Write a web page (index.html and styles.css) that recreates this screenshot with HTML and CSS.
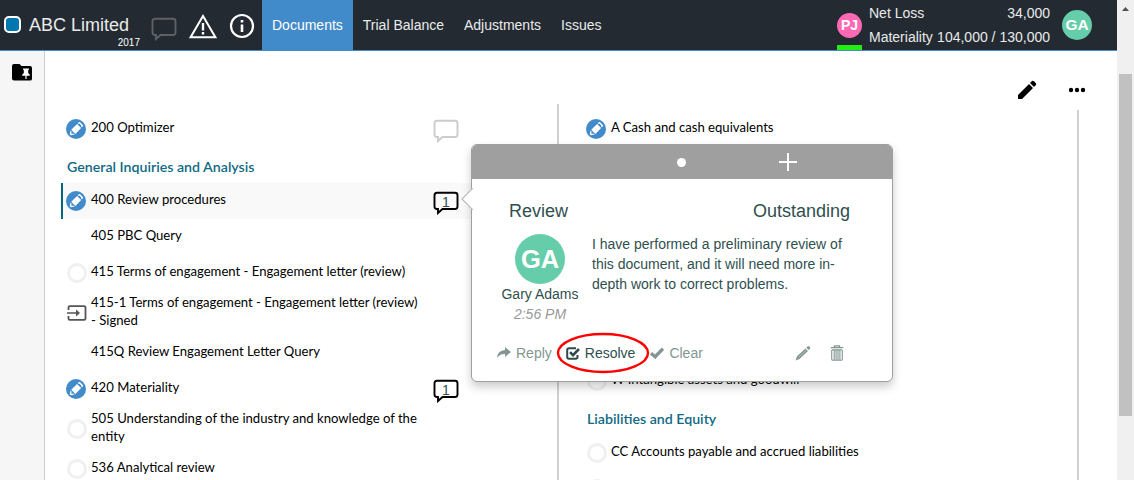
FILE: index.html
```
<!DOCTYPE html>
<html lang="en">
<head>
<meta charset="utf-8">
<title>ABC Limited</title>
<link rel="stylesheet" href="styles.css">
</head>
<body>
<svg class="defs" width="0" height="0">
  <symbol id="edit" viewBox="0 0 20 20">
    <circle cx="10" cy="10" r="10" fill="#428bca"/>
    <g transform="rotate(45 10 10)" fill="#fff">
      <rect x="7.2" y="5.7" width="5.8" height="8.2"/>
      <path d="M7.2 4.7V3.4Q7.2 2.4 8.2 2.4H12Q13 2.4 13 3.4V4.7H11.8V3.8H8.4V4.7ZM7.2 14.9L9.4 18.2H10.8L13 14.9H11.7L10.1 16.7L8.5 14.9Z"/>
    </g>
  </symbol>
  <symbol id="bubble" viewBox="0 0 26 24">
    <path d="M4 1.700H22Q24.500 1.700 24.500 4.200V15.500Q24.500 18 22 18H9.500L5 22V18H4Q1.500 18 1.500 15.500V4.200Q1.500 1.700 4 1.700Z" fill="none" stroke="currentColor" stroke-width="1.900"/>
  </symbol>
</svg>
<div class="app">
  <div class="page">
    <header class="topbar">
      <span class="logo"></span>
      <div class="client"><span class="client-name">ABC Limited</span><span class="year">2017</span></div>
      <svg class="bubble top-bubble"><use href="#bubble"/></svg>
      <svg class="warn" width="30" height="26" viewBox="0 0 30 26"><path d="M15 3L27.400 24.200H2.600Z" fill="none" stroke="#fff" stroke-width="2"/><path d="M15 10V17.500M15 19V21.500" stroke="#fff" stroke-width="2.400"/></svg>
      <svg class="info" width="26" height="26" viewBox="0 0 26 26"><circle cx="13" cy="13" r="11" fill="none" stroke="#fff" stroke-width="2.200"/><path d="M13 7V9.600M13 11.500V19" stroke="#fff" stroke-width="2.600"/></svg>
      <nav class="tabs">
        <a class="tab active">Documents</a><a class="tab">Trial Balance</a><a class="tab">Adjustments</a><a class="tab">Issues</a>
      </nav>
      <div class="peer"><span class="avatar pink">PJ</span><span class="online"></span></div>
      <div class="totals">
        <div class="total"><span>Net Loss</span><span>34,000</span></div>
        <div class="total"><span>Materiality</span><span>104,000 / 130,000</span></div>
      </div>
      <span class="avatar green">GA</span>
    </header>
    <div class="main">
      <aside class="rail">
        <svg width="20" height="17" viewBox="0 0 20 17"><path d="M2 0H7.500L9.500 2H18Q20 2 20 4V15Q20 16.500 18 16.500H2Q0 16.500 0 14.500V2Q0 0 2 0Z"/><path d="M11 4.500H17V5.700H16.200V9L17.800 10.800V11.700H14.600V15H13.400V11.700H10.200V10.800L11.800 9V5.700H11Z" fill="#fff"/></svg>
      </aside>
      <section class="column left">
        <div class="row"><span class="icon"><svg class="mark"><use href="#edit"/></svg></span><span class="label">200 Optimizer</span><span class="note"><svg class="bubble faint"><use href="#bubble"/></svg></span></div>
        <h2 class="heading">General Inquiries and Analysis</h2>
        <div class="row selected"><span class="icon"><svg class="mark"><use href="#edit"/></svg></span><span class="label">400 Review procedures</span><span class="note"><svg class="bubble"><use href="#bubble"/></svg><b class="count">1</b></span></div>
        <div class="row"><span class="icon"></span><span class="label">405 PBC Query</span></div>
        <div class="row"><span class="icon"><i class="ring"></i></span><span class="label">415 Terms of engagement - Engagement letter (review)</span></div>
        <div class="row double"><span class="icon"><svg class="import" width="20" height="16" viewBox="0 0 20 16"><path d="M1.500 5V2.500Q1.500 1.200 2.800 1.200H17.200Q18.500 1.200 18.500 2.500V13.500Q18.500 14.800 17.200 14.800H2.800Q1.500 14.800 1.500 13.500V11" fill="none" stroke="#555" stroke-width="1.800"/><path d="M0 7.200H9V4.500L13 8L9 11.500V8.800H0Z" fill="#555"/></svg></span><span class="label">415-1 Terms of engagement - Engagement letter (review)<br>- Signed</span></div>
        <div class="row"><span class="icon"></span><span class="label">415Q Review Engagement Letter Query</span></div>
        <div class="row"><span class="icon"><svg class="mark"><use href="#edit"/></svg></span><span class="label">420 Materiality</span><span class="note"><svg class="bubble"><use href="#bubble"/></svg><b class="count">1</b></span></div>
        <div class="row double"><span class="icon"><i class="ring"></i></span><span class="label">505 Understanding of the industry and knowledge of the<br>entity</span></div>
        <div class="row"><span class="icon"><i class="ring"></i></span><span class="label">536 Analytical review</span></div>
      </section>
      <section class="column right">
        <div class="tools">
          <svg width="20" height="20" viewBox="0 0 20 20"><path d="M1 19V15L12 4L16 8L5 19ZM13 3L15 1Q16 .5 17 1.300L18.700 3Q19.500 4 19 5L17 7Z"/></svg>
          <svg width="18" height="6" viewBox="0 0 18 6"><circle cx="3" cy="3" r="2.200"/><circle cx="9" cy="3" r="2.200"/><circle cx="15" cy="3" r="2.200"/></svg>
        </div>
        <div class="list">
          <div class="row"><span class="icon"><svg class="mark"><use href="#edit"/></svg></span><span class="label">A Cash and cash equivalents</span></div>
          <div class="row covered"><span class="icon"><i class="ring"></i></span><span class="label">W Intangible assets and goodwill</span></div>
          <h2 class="heading">Liabilities and Equity</h2>
          <div class="row"><span class="icon"><i class="ring"></i></span><span class="label">CC Accounts payable and accrued liabilities</span></div>
          <div class="row"><span class="icon"><i class="ring"></i></span></div>
        </div>
      </section>
    </div>
  </div>
  <div class="scrollbar"><svg width="17" height="17" viewBox="0 0 17 17"><path d="M5 11L8.500 7L12 11Z" fill="#505050"/></svg><span class="thumb"></span></div>

  <div class="popover">
    <svg class="arrow" width="12" height="22" viewBox="0 0 12 22"><path d="M12 0L1 11L12 22" fill="#fff" stroke="#bbb" stroke-width="1.200"/></svg>
    <div class="pop-head">
      <i class="dot"></i>
      <svg class="plus" width="18" height="18" viewBox="0 0 18 18"><path d="M9 0V18M0 9H18" stroke="#fff" stroke-width="2"/></svg>
    </div>
    <div class="pop-title"><span>Review</span><span>Outstanding</span></div>
    <div class="pop-body">
      <div class="author"><span class="avatar big">GA</span><span>Gary Adams</span><em>2:56 PM</em></div>
      <p class="message">I have performed a preliminary review of<br>this document, and it will need more in-<br>depth work to correct problems.</p>
    </div>
    <div class="actions">
      <span class="action reply"><svg width="14" height="12" viewBox="0 0 14 12"><path d="M8 0L14 5L8 10V7Q3 6.700 0 11Q.5 3.500 8 3Z" fill="#839693"/></svg>Reply</span>
      <span class="action resolve"><svg width="14" height="13" viewBox="0 0 14 13"><path d="M10 1.200H3Q1.200 1.200 1.200 3V10Q1.200 11.800 3 11.800H9.500Q11.500 11.800 11.500 10V8" fill="none" stroke="#2f4a4a" stroke-width="2"/><path d="M4 5.200L7 8.200L13 2" fill="none" stroke="#2f4a4a" stroke-width="2.600"/></svg>Resolve<svg class="highlight" width="94" height="42" viewBox="0 0 94 42"><ellipse cx="47" cy="21" rx="45" ry="19" fill="none" stroke="#f00" stroke-width="2.400"/></svg></span>
      <span class="action clear"><svg width="14" height="12" viewBox="0 0 14 12"><path d="M1 6.200L5.200 9.800L13 1.700" fill="none" stroke="#839693" stroke-width="3.400"/></svg>Clear</span>
      <svg class="pen" width="16" height="16" viewBox="0 0 16 16"><path d="M.5 15.500L2 11.300L10.500 3.500L13 6L4.500 14ZM11.300 2.700L12.800 1.300Q13.500 .7 14.300 1.500L15 2.200Q15.500 3 14.900 3.700L13.600 5Z" fill="#839693"/><path d="M3.500 12.500L11.500 5" stroke="#fff" stroke-width=".4"/></svg>
      <svg class="trash" width="14" height="16" viewBox="0 0 14 16"><path d="M4.500 2V.8H9.500V2M.7 2.700H13.300M2 4.800H12" fill="none" stroke="#839693" stroke-width="1.300"/><path d="M1.700 5V14Q1.700 15.300 3 15.300H11Q12.300 15.300 12.300 14V5M4.200 5V15M6.100 5V15M8 5V15M9.900 5V15" fill="none" stroke="#839693" stroke-width="1.100"/></svg>
    </div>
  </div>
</div>
</body>
</html>
```

FILE: styles.css
```
* { box-sizing: border-box; }
body { margin: 0; font: 14px "Liberation Sans", Arial, sans-serif; background: #fff; overflow: hidden; }
svg { display: block; flex: none; }
.defs { position: absolute; }
.app { position: relative; display: flex; width: 1134px; height: 480px; overflow: hidden; }
.page { width: 1117px; display: flex; flex-direction: column; }

.topbar { height: 51px; flex: none; display: flex; background: #232a32; border-bottom: 1px solid #428bca; color: #eaeaea; }
.logo { width: 17px; height: 17px; margin: 16px 0 0 4px; flex: none; border: 2px solid #fff; border-radius: 5px; background: #0077ae; }
.client { width: 111px; margin-left: 8px; padding-top: 14px; flex: none; display: flex; flex-direction: column; }
.client-name { font-size: 18px; line-height: 22px; }
.year { font-size: 10px; line-height: 14px; text-align: right; color: #fff; }
.bubble { width: 26px; height: 24px; color: #000; }
.top-bubble { margin: 17px 0 0 11px; color: #5d6166; }
.warn { margin: 13px 0 0 11px; }
.info { margin: 13px 0 0 11px; }
.tabs { display: flex; margin-left: 7px; }
.tab { padding: 0 10px; line-height: 50px; }
.active { background: #428bca; color: #fff; }
.peer { width: 25px; margin: 13px 0 0 auto; display: flex; flex-direction: column; justify-content: space-between; }
.avatar { display: flex; align-items: center; justify-content: center; border-radius: 50%; color: #fff; font-weight: bold; flex: none; }
.pink { width: 25px; height: 25px; background: #ff69b4; font-size: 14px; line-height: 23px; padding-bottom: 1px; }
.online { height: 5px; background: #22ee11; }
.totals { width: 181px; margin: 1px 0 0 7px; }
.total { display: flex; justify-content: space-between; line-height: 24px; }
.green { width: 30px; height: 30px; margin: 10px 25px 0 12px; background: #66cdaa; font-size: 15.5px; }

.main { flex: 1; display: flex; min-height: 0; font-family: Lato, sans-serif; font-size: 13.12px; color: #000; }
.rail { width: 45px; flex: none; background: #f6f6f6; border-right: 1px solid #ccc; padding: 13px 0 0 12px; }
.column { flex: none; }
.left { width: 426px; padding: 60px 0 0 16px; }
.row { height: 36px; display: flex; line-height: 18px; }
.left .row, .left .heading { border-left: 2px solid transparent; }
.row.selected { background: #f9f9f9; border-left-color: #00677f; }
.icon { width: 28px; flex: none; padding: 8px 0 0 3px; }
.mark { width: 20px; height: 20px; }
.ring { display: block; width: 20px; height: 20px; margin-left: 1px; border: 2.500px solid #f0f0f0; border-width: 3px; border-radius: 50%; }
.label { padding-top: 7px; white-space: nowrap; }
.double { height: 44px; }
.double .label { padding-top: 2px; }
.double .icon { padding-top: 12px; }
.note { position: relative; margin: 8px 12px 0 auto; }
.faint { color: #ccc; }
.count { position: absolute; inset: 3px 0 auto 0; text-align: center; font: 14px/16px "Liberation Sans", Arial, sans-serif; color: #2f4f4f; }
.heading { margin: 0; height: 36px; padding: 11px 0 0 4px; font-size: 14.2px; line-height: 18px; color: #106a85; font-weight: 600; }
.import { margin: 2px 0 0 1px; }

.right { width: 608px; display: flex; flex-direction: column; padding: 29px 0 0 86px; background: linear-gradient(#d0d0d0, #d0d0d0) no-repeat 86px 53px / 2px 100%; }
.tools { display: flex; align-items: center; gap: 31px; height: 20px; margin-left: 460px; }
.list { margin-top: 10px; width: 522px; height: 370px; flex: none; padding: 1px 0 0 24px; border-right: 2px solid #d0d0d0; }
.list .icon { width: 30px; padding-left: 5px; }
.covered { margin-top: 216px; }
.list .heading { padding-left: 6px; }

.scrollbar { width: 17px; background: #f0f0f0; }
.thumb { display: block; width: 13px; height: 342px; margin: 57px 0 0 2px; background: #c1c1c1; }

.popover { position: absolute; left: 471px; top: 144px; width: 422px; height: 238px; background: #fff; border: 1px solid #9f9f9f; border-radius: 6px; box-shadow: 0 5px 10px rgba(0,0,0,.2); color: #2f4f4f; }
.arrow { position: absolute; left: -11px; top: 43px; }
.pop-head { height: 34px; display: flex; align-items: center; background: #9f9f9f; border-radius: 5px 5px 0 0; padding-left: 205px; }
.dot { width: 9px; height: 9px; border-radius: 50%; background: #fff; }
.plus { margin-left: 93px; }
.pop-title { display: flex; justify-content: space-between; padding: 21px 42px 0 37px; font-size: 18px; line-height: 22px; }
.pop-body { display: flex; padding: 12px 0 0 28px; }
.author { width: 80px; display: flex; flex-direction: column; align-items: center; line-height: 20px; white-space: nowrap; }
.author em { color: #999; }
.big { width: 50px; height: 50px; background: #66cdaa; font-size: 25.5px; }
.message { margin: 0 0 0 12px; line-height: 20px; white-space: nowrap; }
.actions { display: flex; align-items: center; height: 20px; margin: 19px 0 0 25px; color: #839693; }
.action { display: flex; align-items: center; gap: 5px; }
.resolve { position: relative; margin-left: 14px; color: #2f4f4f; }
.highlight { position: absolute; left: -10px; top: -13px; }
.clear { margin-left: 15px; gap: 5px; }
.pen { margin-left: 92px; }
.trash { margin-left: 19px; }
```
